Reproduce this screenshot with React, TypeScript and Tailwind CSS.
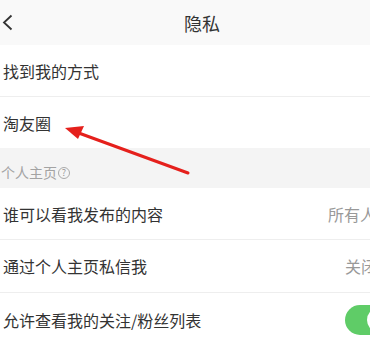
export default function App() {
  const font = { fontFamily: '"Noto Sans CJK SC", "Noto Sans", sans-serif' };
  return (
    <div className="relative w-[370px] h-[347px] overflow-hidden bg-white text-[#333]" style={font}>
      <header className="h-[45px] flex items-center bg-[#f9f9f9] relative">
        <svg className="absolute left-[2px] top-[14px]" width="11" height="17" viewBox="0 0 11 17">
          <path d="M9.5 1.5 L2 8.5 L9.5 15.5" fill="none" stroke="#333" strokeWidth="1.8" />
        </svg>
        <h1 className="w-full pl-[34px] text-center text-[18px] leading-none text-[#333]">隐私</h1>
      </header>

      <div className="h-[52px] flex items-center pl-[3px] border-b border-[#eeeeee] text-[16px]">找到我的方式</div>
      <div className="h-[51px] flex items-center pl-[3px] text-[16px]">淘友圈</div>

      <div className="h-[40px] flex items-center pl-[1px] pt-[9px] bg-[#f4f4f4] text-[14px] text-[#a3a3a3]">
        个人主页
        <span className="ml-[1px] w-[12px] h-[12px] rounded-full border border-[#aaa] text-[9px] leading-none flex items-center justify-center text-[#999]">?</span>
      </div>

      <div className="h-[52px] flex items-center justify-between pl-[3px] border-b border-[#eeeeee] text-[16px]">
        <span>谁可以看我发布的内容</span>
        <span className="text-[#999] whitespace-nowrap -mr-[6px]">所有人</span>
      </div>
      <div className="h-[53px] flex items-center justify-between pl-[3px] border-b border-[#eeeeee] text-[16px]">
        <span>通过个人主页私信我</span>
        <span className="text-[#999] whitespace-nowrap -mr-[7px]">关闭</span>
      </div>
      <div className="h-[54px] flex items-center justify-between pl-[3px] text-[16px]">
        <span>允许查看我的关注/粉丝列表</span>
        <span className="w-[50px] h-[30px] rounded-full bg-[#5fcc67] -mr-[25px] flex items-center justify-end pr-[2px]">
          <span className="w-[26px] h-[26px] rounded-full bg-white" />
        </span>
      </div>

      <svg className="absolute left-0 top-0 pointer-events-none" width="370" height="347">
        <line x1="188" y1="173" x2="76" y2="132" stroke="#e5201c" strokeWidth="3" strokeLinecap="round" />
        <polygon points="65,128 84,126 78,139" fill="#e5201c" />
      </svg>
    </div>
  );
}
